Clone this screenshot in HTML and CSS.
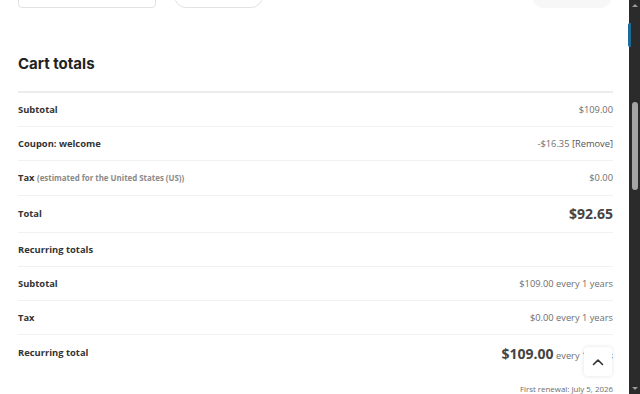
FILE: index.html
```html
<!DOCTYPE html>
<html lang="en">
<head>
  <meta charset="UTF-8" />
  <meta name="viewport" content="width=device-width, initial-scale=1.0"/>
  <title>Cart</title>
  <link rel="stylesheet" href="styles.css">
</head>
<body>
  <main class="page">
    <div class="cart-actions">
      <div class="coupon-input"></div>
      <div class="coupon-btn"></div>
      <div class="update-btn"></div>
    </div>

    <h2 class="cart-title">Cart totals</h2>

    <table class="totals">
      <tr>
        <th>Subtotal</th>
        <td>$109.00</td>
      </tr>
      <tr>
        <th>Coupon: welcome</th>
        <td>-$16.35 <a class="remove" href="#">[Remove]</a></td>
      </tr>
      <tr class="tax-row">
        <th>Tax <small class="note">(estimated for the United States (US))</small></th>
        <td>$0.00</td>
      </tr>
      <tr class="order-total">
        <th>Total</th>
        <td><strong>$92.65</strong></td>
      </tr>
      <tr>
        <th>Recurring totals</th>
        <td></td>
      </tr>
      <tr>
        <th>Subtotal</th>
        <td>$109.00 every 1 years</td>
      </tr>
      <tr>
        <th>Tax</th>
        <td>$0.00 every 1 years</td>
      </tr>
      <tr class="recurring-total">
        <th>Recurring total</th>
        <td>
          <strong>$109.00</strong> every 1 years
          <div class="renewal">First renewal: July 5, 2026</div>
        </td>
      </tr>
    </table>
  </main>

  <div class="scrollbar">
    <span class="arrow up"></span>
    <span class="thumb"></span>
    <span class="arrow down"></span>
  </div>
  <div class="side-tab"></div>

  <a class="to-top" href="#">
    <svg width="12" height="8" viewBox="0 0 12 8"><path d="M1.5 6.5 L6 2 L10.5 6.5" fill="none" stroke="#333" stroke-width="1.6" stroke-linecap="round" stroke-linejoin="round"/></svg>
  </a>
</body>
</html>
```

FILE: styles.css
```css
body {
  margin: 0;
  height: 394px;
  overflow: hidden;
  display: flex;
  background: #fff;
  font-family: 'Open Sans', sans-serif;
  color: #333;
}
.page {
  flex: 1;
  padding: 0 16px 0 18px;
}
.cart-actions {
  display: flex;
  align-items: flex-end;
  height: 30px;
  margin-top: -22px;
}
.coupon-input {
  width: 138px;
  height: 30px;
  border: 1px solid #e2e2e2;
  border-radius: 4px;
  box-sizing: border-box;
}
.coupon-btn {
  width: 89px;
  height: 30px;
  margin-left: 18px;
  border: 1px solid #e2e2e2;
  border-radius: 12px;
  box-sizing: border-box;
}
.update-btn {
  width: 80px;
  height: 28px;
  margin-left: auto;
  margin-right: 1px;
  background: #f7f7f7;
  border-radius: 12px;
}
.cart-title {
  font-family: 'Inter', sans-serif;
  font-size: 15px;
  line-height: 20px;
  font-weight: 700;
  color: #222;
  margin: 45.5px 0 17.5px;
}
.totals {
  width: 100%;
  border-collapse: collapse;
  border-top: 2px solid #ececec;
  font-size: 9.3px;
  line-height: 14px;
}
.totals tr + tr th,
.totals tr + tr td {
  border-top: 1px solid #f1f1f1;
}
.totals th {
  text-align: left;
  font-weight: 700;
  font-size: 9.4px;
  color: #333;
  padding: 9.5px 0;
  vertical-align: top;
  white-space: nowrap;
}
.totals td {
  text-align: right;
  color: #6e6e6e;
  padding: 9.5px 0;
  vertical-align: top;
}
.tax-row th,
.tax-row td {
  padding-bottom: 10.5px;
}
.note {
  font-size: 7.9px;
  color: #8a8a8a;
  font-weight: 700;
}
.remove {
  color: #555;
  text-decoration: none;
}
.order-total td,
.order-total th {
  padding-top: 9.5px;
  padding-bottom: 9.5px;
  vertical-align: middle;
}
.order-total strong {
  font-size: 14px;
  line-height: 16px;
  color: #444;
}
.recurring-total td,
.recurring-total th {
  padding-top: 10.5px;
}
.recurring-total strong {
  font-size: 14px;
  line-height: 16px;
  color: #444;
}
.renewal {
  margin-top: 20px;
  font-size: 7.9px;
  line-height: 12px;
  color: #6e6e6e;
}
.scrollbar {
  width: 11px;
  height: 394px;
  background: #2b2b2b;
  display: flex;
  flex-direction: column;
  align-items: center;
}
.arrow {
  width: 0;
  height: 0;
  border-left: 3px solid transparent;
  border-right: 3px solid transparent;
}
.arrow.up {
  margin-top: 4px;
  border-bottom: 3px solid #9a9a9a;
}
.arrow.down {
  margin-top: auto;
  margin-bottom: 4px;
  border-top: 3px solid #9a9a9a;
}
.thumb {
  width: 6px;
  height: 88px;
  margin-top: 95px;
  border-radius: 3px;
  background: #a5a5a5;
}
.side-tab {
  position: fixed;
  top: 23px;
  right: 9px;
  width: 3px;
  height: 24px;
  border-radius: 2px 0 0 2px;
  background: #1d6a98;
}
.to-top {
  position: fixed;
  left: 584px;
  top: 347px;
  width: 28px;
  height: 29px;
  background: #fff;
  border-radius: 4px;
  box-shadow: 0 0 4px rgba(0, 0, 0, 0.12);
  display: flex;
  align-items: center;
  justify-content: center;
}
```
